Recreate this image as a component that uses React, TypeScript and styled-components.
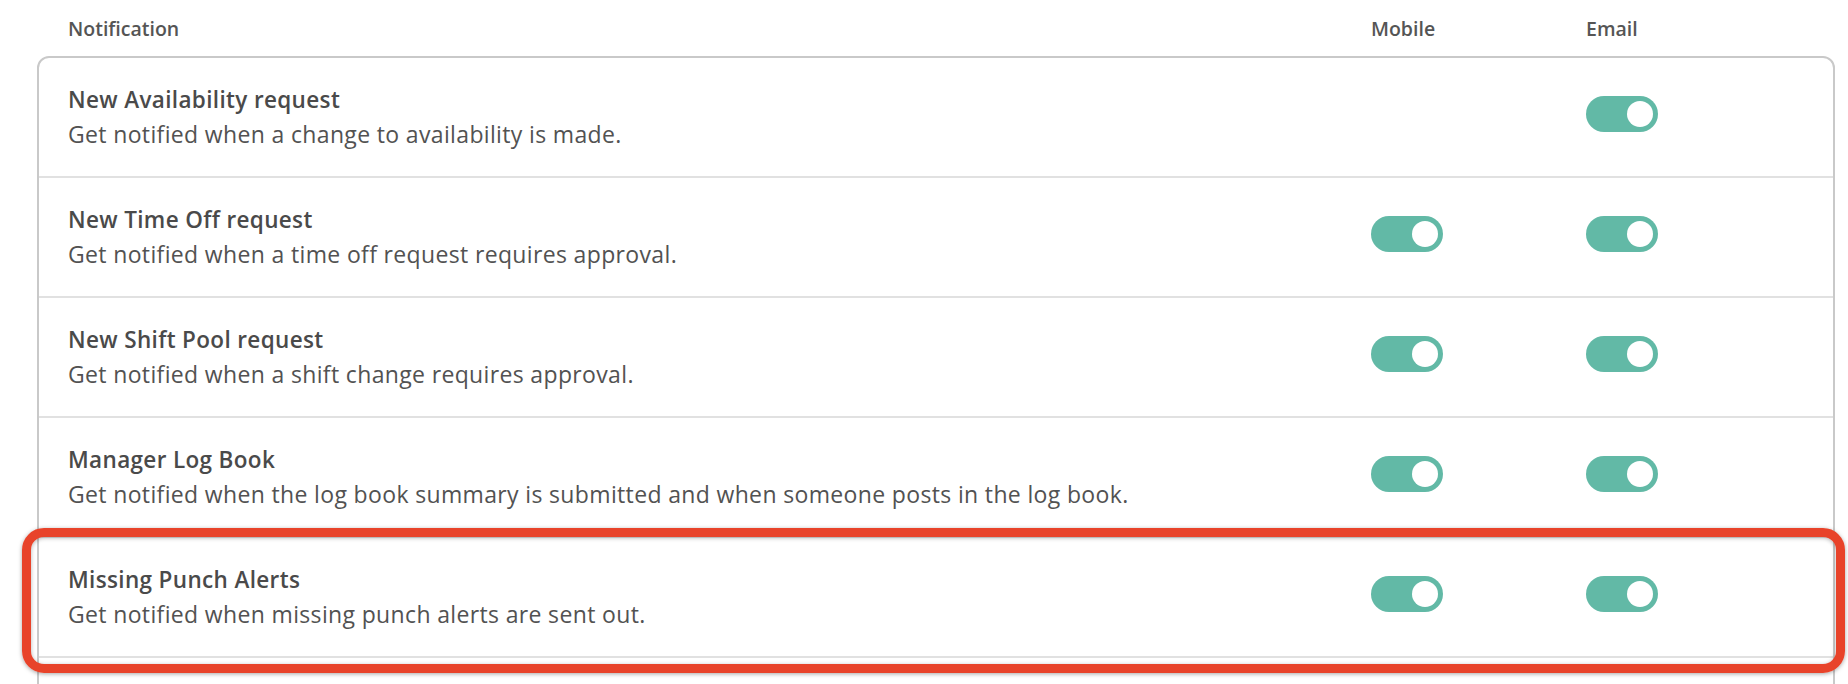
import React from "react";
import styled, { createGlobalStyle } from "styled-components";

const GlobalStyle = createGlobalStyle`
  body {
    margin: 0;
    background: #ffffff;
    font-family: "Open Sans", "Liberation Sans", sans-serif;
    color: #4f4f4f;
  }
`;

const Page = styled.div`
  padding: 0 13px 0 37px;
`;

const Columns = styled.div`
  display: grid;
  grid-template-columns: 1fr 215px 247px;
  align-items: center;
`;

const HeaderRow = styled(Columns)`
  height: 56px;
  padding: 0 2px 0 31px;
`;

const HeaderCell = styled.span`
  font-size: 19.5px;
  font-weight: 600;
  color: #555555;
`;

const Card = styled.div`
  border: 2px solid #c9c9c9;
  border-radius: 12px;
  padding-bottom: 80px;
`;

const Row = styled(Columns)<{ $highlighted?: boolean }>`
  position: relative;
  height: 118px;
  padding-left: 29px;
  border-bottom: 2px solid #e1e1e1;

  ${({ $highlighted }) =>
    $highlighted &&
    `
    &::after {
      content: "";
      position: absolute;
      inset: -10px -12px -17px -17px;
      border: 9px solid #e8432a;
      border-radius: 22px;
      box-shadow: 0 1px 4px rgba(0, 0, 0, 0.35), inset 0 1px 4px rgba(0, 0, 0, 0.3);
      pointer-events: none;
    }
  `}
`;

const Text = styled.div`
  padding-bottom: 1px;
`;

const Title = styled.div`
  font-size: 22.5px;
  font-weight: 600;
  letter-spacing: 0.35px;
  line-height: 34px;
  color: #4a4a4a;
`;

const Description = styled.div`
  font-size: 23px;
  letter-spacing: 0.35px;
  line-height: 34px;
  color: #525252;
`;

const Toggle = styled.button<{ $on: boolean }>`
  position: relative;
  justify-self: start;
  width: 72px;
  height: 36px;
  margin-bottom: 6px;
  padding: 0;
  border: none;
  border-radius: 18px;
  background: ${({ $on }) => ($on ? "#62b9a6" : "#d0d0d0")};
  cursor: pointer;

  &::after {
    content: "";
    position: absolute;
    top: 5px;
    ${({ $on }) => ($on ? "right: 5px;" : "left: 5px;")}
    width: 26px;
    height: 26px;
    border-radius: 50%;
    background: #ffffff;
  }
`;

type Setting = {
  title: string;
  description: string;
  mobile?: boolean;
  email?: boolean;
  highlighted?: boolean;
};

const settings: Setting[] = [
  {
    title: "New Availability request",
    description: "Get notified when a change to availability is made.",
    email: true,
  },
  {
    title: "New Time Off request",
    description: "Get notified when a time off request requires approval.",
    mobile: true,
    email: true,
  },
  {
    title: "New Shift Pool request",
    description: "Get notified when a shift change requires approval.",
    mobile: true,
    email: true,
  },
  {
    title: "Manager Log Book",
    description:
      "Get notified when the log book summary is submitted and when someone posts in the log book.",
    mobile: true,
    email: true,
  },
  {
    title: "Missing Punch Alerts",
    description: "Get notified when missing punch alerts are sent out.",
    mobile: true,
    email: true,
    highlighted: true,
  },
];

const Switch: React.FC<{ on?: boolean }> = ({ on }) =>
  on === undefined ? <span /> : <Toggle role="switch" aria-checked={on} $on={on} />;

export default function App() {
  return (
    <Page>
      <GlobalStyle />
      <HeaderRow>
        <HeaderCell>Notification</HeaderCell>
        <HeaderCell>Mobile</HeaderCell>
        <HeaderCell>Email</HeaderCell>
      </HeaderRow>
      <Card>
        {settings.map((s) => (
          <Row key={s.title} $highlighted={s.highlighted}>
            <Text>
              <Title>{s.title}</Title>
              <Description>{s.description}</Description>
            </Text>
            <Switch on={s.mobile} />
            <Switch on={s.email} />
          </Row>
        ))}
      </Card>
    </Page>
  );
}
